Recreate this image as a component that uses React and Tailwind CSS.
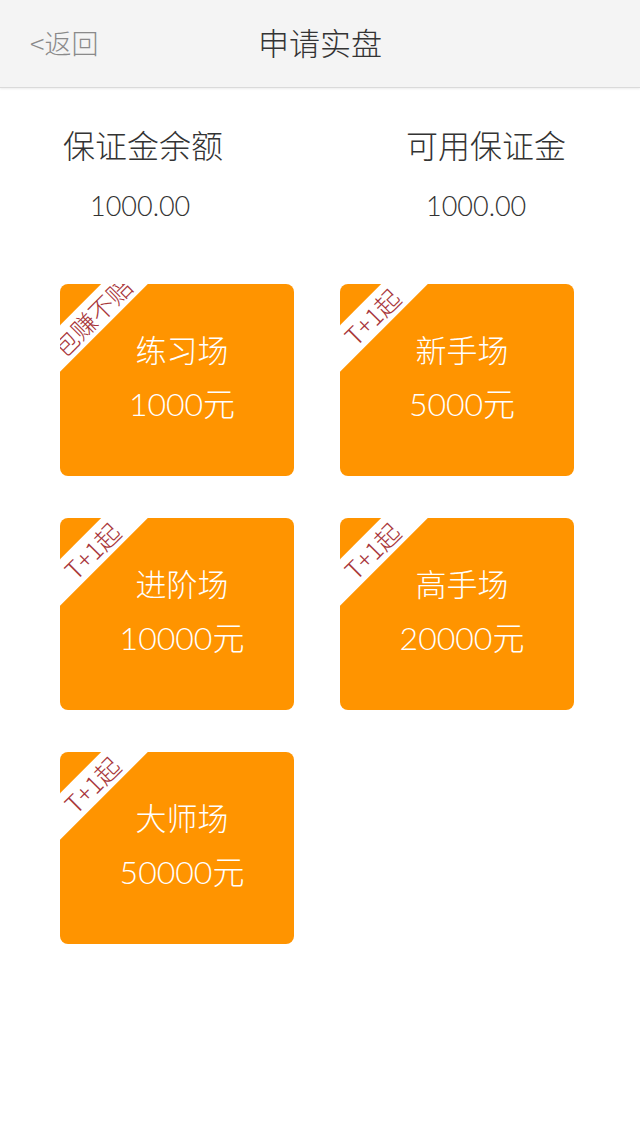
import React from "react";

const cards = [
  { name: "练习场", amount: "1000元", tag: "包赚不赔" },
  { name: "新手场", amount: "5000元", tag: "T+1起" },
  { name: "进阶场", amount: "10000元", tag: "T+1起" },
  { name: "高手场", amount: "20000元", tag: "T+1起" },
  { name: "大师场", amount: "50000元", tag: "T+1起" },
];

const font = { fontFamily: 'Lato, "Noto Sans CJK SC", sans-serif' };

function Card({ name, amount, tag }) {
  return (
    <div className="relative h-[192px] w-[234px] overflow-hidden rounded-[8px] bg-[#ff9400]">
      <div className="absolute left-[-38px] top-[16px] flex h-[33px] w-[140px] -rotate-45 items-center justify-center bg-white">
        <span
          className="whitespace-nowrap text-[25px] font-light leading-none text-[#a8363a]"
          style={{ fontFamily: '"Noto Sans CJK SC", sans-serif' }}
        >
          {tag}
        </span>
      </div>
      <div className="flex h-full flex-col items-center justify-center pl-[10px] pb-[6px] text-white">
        <div className="text-[31px] font-light leading-[40px]">{name}</div>
        <div className="mt-[14px] text-[32px] font-light leading-[40px]">{amount}</div>
      </div>
    </div>
  );
}

export default function App() {
  return (
    <div className="min-h-[1136px] w-[640px] bg-white" style={font}>
      <div className="relative flex h-[88px] items-center justify-center border-b border-[#dadada] bg-[#f4f4f4] shadow-[0_1px_2px_rgba(0,0,0,0.08)]">
        <div
          className="absolute left-[30px] top-0 flex h-full items-center text-[27px] font-light text-[#8a8a8a]"
          style={{ fontFamily: '"Noto Sans CJK SC", sans-serif' }}
        >
          &lt;返回
        </div>
        <div className="text-[31px] font-light text-[#333333]">申请实盘</div>
      </div>

      <div className="flex pt-[40px] text-[#333333]">
        <div className="flex w-[340px] flex-col">
          <div className="ml-[63px] text-[32px] font-light leading-[36px]">保证金余额</div>
          <div className="ml-[90px] mt-[24px] text-[27px] font-light leading-[36px]">1000.00</div>
        </div>
        <div className="flex w-[300px] flex-col">
          <div className="ml-[66px] text-[32px] font-light leading-[36px]">可用保证金</div>
          <div className="ml-[86px] mt-[24px] text-[27px] font-light leading-[36px]">1000.00</div>
        </div>
      </div>

      <div className="mt-[60px] grid grid-cols-[234px_234px] gap-x-[46px] gap-y-[42px] px-[60px]">
        {cards.map((c) => (
          <Card key={c.name} {...c} />
        ))}
      </div>
    </div>
  );
}
